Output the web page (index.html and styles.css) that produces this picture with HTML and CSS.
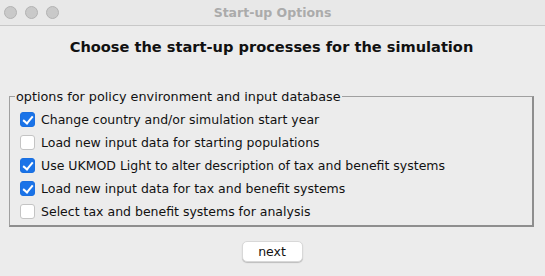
FILE: index.html
```html
<!DOCTYPE html>
<html>
<head>
    <meta charset="UTF-8">
    <link rel="stylesheet" href="styles.css">
</head>
<body>
    <div class="window">
        <div class="titlebar">
            <div class="lights">
                <span class="light"></span>
                <span class="light"></span>
                <span class="light"></span>
            </div>
            <div class="window-title">Start-up Options</div>
        </div>

        <div class="content">
            <h1 class="heading">Choose the start-up processes for the simulation</h1>

            <fieldset class="group">
                <legend>options for policy environment and input database</legend>
                <label class="option"><span class="box checked"></span>Change country and/or simulation start year</label>
                <label class="option"><span class="box"></span>Load new input data for starting populations</label>
                <label class="option"><span class="box checked"></span>Use UKMOD Light to alter description of tax and benefit systems</label>
                <label class="option"><span class="box checked"></span>Load new input data for tax and benefit systems</label>
                <label class="option"><span class="box"></span>Select tax and benefit systems for analysis</label>
            </fieldset>

            <div class="actions">
                <button class="btn">next</button>
            </div>
        </div>
    </div>
</body>
</html>
```

FILE: styles.css
```css
body {
    margin: 0;
    width: 545px;
    height: 276px;
    overflow: hidden;
    background: #ececec;
    font-family: "DejaVu Sans", Arial, sans-serif;
    color: #111;
}

.window {
    height: 276px;
    display: flex;
    flex-direction: column;
}

.titlebar {
    height: 25px;
    border-bottom: 1px solid #c8c8c8;
    background: #e8e8e8;
    display: flex;
    align-items: center;
    position: relative;
}

.lights {
    display: flex;
    gap: 8px;
    padding-left: 4px;
}

.light {
    width: 11px;
    height: 11px;
    border-radius: 50%;
    background: #c9c9c9;
    border: 0.5px solid #b3b3b3;
}

.window-title {
    position: absolute;
    left: 0;
    right: 0;
    text-align: center;
    font-size: 12.5px;
    font-weight: bold;
    color: #ababab;
}

.content {
    padding: 0 11px 0 9px;
}

.heading {
    margin: 12px 0 0;
    text-align: center;
    font-size: 14.6px;
    font-weight: bold;
    color: #111;
}

.group {
    margin: 34px 0 0;
    padding: 4px 0 2px 10px;
    border: 1px solid #999;
    border-right-width: 2px;
    border-bottom-width: 2px;
    border-color: #a0a0a0 #8e8e8e #8e8e8e #a0a0a0;
}

.group legend {
    padding: 0 1px;
    margin-left: -5px;
    font-size: 12.8px;
}

.option {
    display: flex;
    align-items: center;
    gap: 6px;
    height: 23px;
    font-size: 12.5px;
}

.box {
    width: 13px;
    height: 13px;
    border: 1px solid #c4c4c4;
    border-radius: 3px;
    background: #fff;
    flex-shrink: 0;
    position: relative;
}

.box.checked {
    background: #1a73e8;
    border-color: #1a6fe0;
}

.box.checked::after {
    content: "";
    position: absolute;
    left: 4px;
    top: 1px;
    width: 4px;
    height: 8px;
    border: solid #fff;
    border-width: 0 2px 2px 0;
    transform: rotate(40deg);
}

.actions {
    display: flex;
    justify-content: center;
    margin-top: 14px;
}

.btn {
    width: 61px;
    height: 21px;
    padding: 0;
    background: #fff;
    border: 1px solid #d8d8d8;
    border-radius: 5px;
    box-shadow: 0 1px 1px rgba(0,0,0,0.2);
    font-family: "DejaVu Sans", Arial, sans-serif;
    font-size: 12.5px;
    color: #111;
    margin-left: 1px;
}
```
